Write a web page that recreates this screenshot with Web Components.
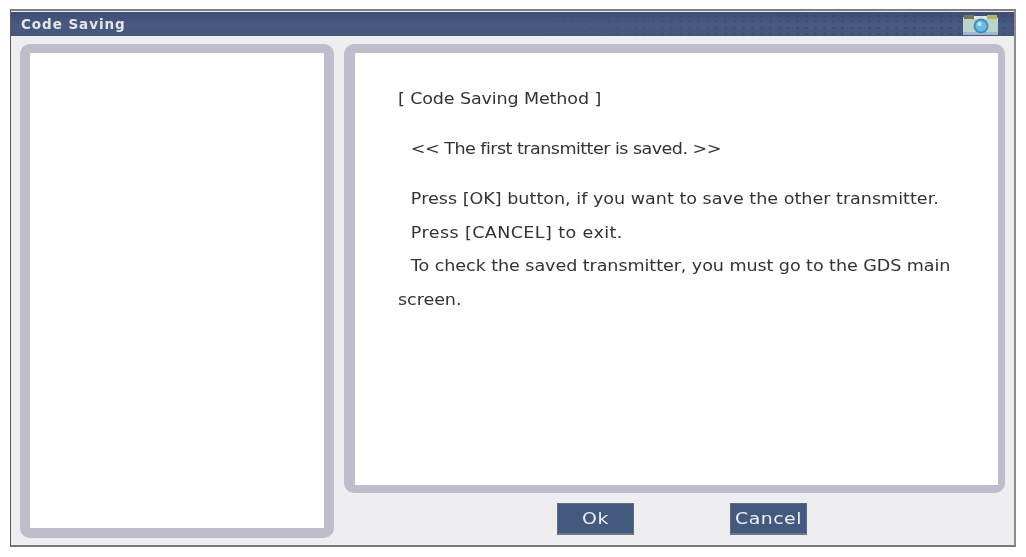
<!DOCTYPE html>
<html>
<head>
<meta charset="utf-8">
<title>Code Saving</title>
<style>
  html, body { margin: 0; background: #fff; }
  body { font-family: "DejaVu Sans", sans-serif; }
</style>
</head>
<body>
<code-saving-dialog>
  <panel-box slot="list"></panel-box>
  <panel-box slot="message" pad>
    <saving-message></saving-message>
  </panel-box>
  <dialog-button slot="actions" style="margin-left:213px">Ok</dialog-button>
  <dialog-button slot="actions" style="margin-left:96px">Cancel</dialog-button>
</code-saving-dialog>

<script>
// Dialog window: title bar, two panels, button row
class CodeSavingDialog extends HTMLElement {
  constructor() {
    super();
    this.attachShadow({ mode: 'open' });
  }

  connectedCallback() {
    this.shadowRoot.innerHTML = `
      <style>
        :host { display: block; width: 1006px; height: 538px; margin: 9px 0 0 10px; }
        .window {
          box-sizing: border-box;
          height: 100%;
          display: flex;
          flex-direction: column;
          background: #eeedef;
          border: 1px solid #5c5c60;
          border-top: 2px solid #808084;
          border-right: 2px solid #8a8a8e;
          border-bottom: 2px solid #77777b;
        }
        .title {
          height: 24px;
          margin-top: 1px;
          flex: none;
          display: flex;
          align-items: center;
          justify-content: space-between;
          padding: 0 16px 0 10px;
          position: relative;
          background: linear-gradient(#3f4d76, #485a80 55%, #43587a);
          color: #e4e6ea;
          font: bold 13.5px "DejaVu Sans", sans-serif;
          letter-spacing: .95px;
        }
        .title::before {
          content: '';
          position: absolute;
          top: 0; bottom: 0; right: 0; left: 440px;
          background: radial-gradient(circle, rgba(30,40,75,.28) .8px, transparent 1.4px) 0 1px / 9px 6px;
          -webkit-mask-image: linear-gradient(90deg, transparent, #000 60%);
        }
        .title span, .title svg { position: relative; filter: blur(.45px); }
        .title svg { margin-top: 2px; }
        .body {
          flex: 1;
          display: grid;
          grid-template-columns: 314px 661px;
          grid-template-rows: 449px auto;
          column-gap: 10px;
          padding: 8px 0 0 9px;
        }
        .left { grid-row: 1 / 3; height: 494px; }
        .actions { display: flex; align-items: flex-start; padding-top: 10px; }
      </style>
      <div class="window">
        <div class="title">
          <span>Code Saving</span>
          <svg width="35" height="22" viewBox="0 0 35 22">
            <rect x="0" y="3" width="35" height="18" rx="1" fill="#bcd3c8"/>
            <rect x="1" y="1" width="10" height="4" fill="#6f7a5c"/>
            <rect x="24" y="1" width="10" height="4" fill="#b4b85e"/>
            <rect x="11" y="2" width="13" height="3" fill="#dfe8dd"/>
            <rect x="0" y="18" width="35" height="3" fill="#9fb8c8"/>
            <circle cx="18" cy="12" r="7.5" fill="#3f8fc2"/>
            <circle cx="18" cy="12" r="5.5" fill="#6db8de"/>
            <circle cx="16.5" cy="10" r="2.2" fill="#bfe4f2"/>
          </svg>
        </div>
        <div class="body">
          <div class="left"><slot name="list"></slot></div>
          <div><slot name="message"></slot></div>
          <div class="actions"><slot name="actions"></slot></div>
        </div>
      </div>
    `;
  }
}
customElements.define('code-saving-dialog', CodeSavingDialog);

// Grey rounded frame with a white inside
class PanelBox extends HTMLElement {
  constructor() {
    super();
    this.attachShadow({ mode: 'open' });
  }

  connectedCallback() {
    this.shadowRoot.innerHTML = `
      <style>
        :host { display: block; height: 100%; box-sizing: border-box; }
        .frame {
          box-sizing: border-box;
          height: 100%;
          padding: 9px 7px 8px 11px;
          background: #bdbdcb;
          border-radius: 10px;
        }
        :host(:not([pad])) .frame { padding: 9px 10px 10px 10px; }
        .inner { height: 100%; background: #fff; border-radius: 1px; box-sizing: border-box; }
      </style>
      <div class="frame"><div class="inner"><slot></slot></div></div>
    `;
  }
}
customElements.define('panel-box', PanelBox);

// Instruction text in the right panel, the source font is a wide gothic so stretch it
class SavingMessage extends HTMLElement {
  constructor() {
    super();
    this.attachShadow({ mode: 'open' });
  }

  connectedCallback() {
    const lines = [
      { text: '[ Code Saving Method ]', cls: 'gap', ls: -0.12 },
      { text: '<< The first transmitter is saved. >>', cls: 'in gap', ls: -0.46 },
      { text: 'Press [OK] button, if you want to save the other transmitter.', cls: 'in', ls: 0 },
      { text: 'Press [CANCEL] to exit.', cls: 'in', ls: 0.33 },
      { text: 'To check the saved transmitter, you must go to the GDS main screen.', cls: 'first', ls: -0.06 }
    ];
    this.shadowRoot.innerHTML = `
      <style>
        :host { display: block; padding: 30px 0 0 43px; color: #333; }
        .text { width: 500px; transform: scaleX(1.17); transform-origin: 0 0; filter: blur(.4px); }
        p {
          margin: 0;
          font: 15px/33.5px "DejaVu Sans", sans-serif;
        }
        .gap { margin-bottom: 16.5px; }
        .in { padding-left: 11px; }
        .first { text-indent: 11px; }
      </style>
      <div class="text">
        ${lines.map(l => `<p class="${l.cls}" style="letter-spacing:${l.ls}px">${l.text.replace(/</g, '&lt;').replace(/>/g, '&gt;')}</p>`).join('')}
      </div>
    `;
  }
}
customElements.define('saving-message', SavingMessage);

// Dark blue button
class DialogButton extends HTMLElement {
  constructor() {
    super();
    this.attachShadow({ mode: 'open' });
  }

  connectedCallback() {
    this.shadowRoot.innerHTML = `
      <style>
        :host { display: block; }
        button {
          box-sizing: border-box;
          width: 77px;
          height: 32px;
          padding: 0;
          border: 1px solid #5d6a80;
          border-bottom: 2px solid #6f7684;
          background: #43597e;
          color: #eef0f3;
          font: 16px "DejaVu Sans", sans-serif;
          letter-spacing: .4px;
        }
        span { filter: blur(.3px); display: block; transform: scaleX(1.18); }
      </style>
      <button><span><slot></slot></span></button>
    `;
  }
}
customElements.define('dialog-button', DialogButton);
</script>
</body>
</html>
